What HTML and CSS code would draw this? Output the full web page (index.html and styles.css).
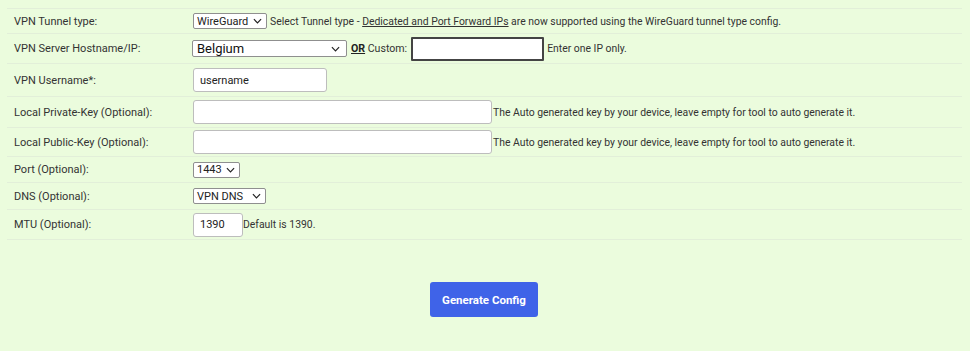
FILE: index.html
```html
<!DOCTYPE html>
<html>
<head>
<meta charset="utf-8">
<link rel="stylesheet" href="styles.css">
</head>
<body>
<form class="form">
  <div class="rows">
    <div class="row r1">
      <div class="label">VPN Tunnel type:</div>
      <div class="field">
        <span class="select sel-tunnel">WireGuard<svg class="chev" viewBox="0 0 10 6"><path d="M1 1l4 4 4-4" fill="none" stroke="#222" stroke-width="1.3"/></svg></span>
        <span class="note">Select Tunnel type - <u class="link">Dedicated and Port Forward IPs</u> are now supported using the WireGuard tunnel type config.</span>
      </div>
    </div>
    <div class="row r2">
      <div class="label">VPN Server Hostname/IP:</div>
      <div class="field">
        <span class="select sel-server">Belgium<svg class="chev" viewBox="0 0 10 6"><path d="M1 1l4 4 4-4" fill="none" stroke="#222" stroke-width="1.3"/></svg></span>
        <span class="note or"><b><u>OR</u></b> Custom:</span>
        <span class="input custom"></span>
        <span class="note">Enter one IP only.</span>
      </div>
    </div>
    <div class="row r3">
      <div class="label">VPN Username*:</div>
      <div class="field">
        <span class="input user">username</span>
      </div>
    </div>
    <div class="row r4">
      <div class="label">Local Private-Key (Optional):</div>
      <div class="field">
        <span class="input key"></span>
        <span class="note">The Auto generated key by your device, leave empty for tool to auto generate it.</span>
      </div>
    </div>
    <div class="row r5">
      <div class="label">Local Public-Key (Optional):</div>
      <div class="field">
        <span class="input key"></span>
        <span class="note">The Auto generated key by your device, leave empty for tool to auto generate it.</span>
      </div>
    </div>
    <div class="row r6">
      <div class="label">Port (Optional):</div>
      <div class="field">
        <span class="select sel-port">1443<svg class="chev" viewBox="0 0 10 6"><path d="M1 1l4 4 4-4" fill="none" stroke="#222" stroke-width="1.3"/></svg></span>
      </div>
    </div>
    <div class="row r7">
      <div class="label">DNS (Optional):</div>
      <div class="field">
        <span class="select sel-dns">VPN DNS<svg class="chev" viewBox="0 0 10 6"><path d="M1 1l4 4 4-4" fill="none" stroke="#222" stroke-width="1.3"/></svg></span>
      </div>
    </div>
    <div class="row r8">
      <div class="label">MTU (Optional):</div>
      <div class="field">
        <span class="input mtu">1390</span>
        <span class="note">Default is 1390.</span>
      </div>
    </div>
  </div>
  <div class="actions">
    <span class="btn">Generate Config</span>
  </div>
</form>
</body>
</html>
```

FILE: styles.css
```css
html, body {
  margin: 0;
  padding: 0;
  background: #ebfcdd;
}
body {
  font-family: Roboto, "Liberation Sans", sans-serif;
  color: #333;
  font-size: 11px;
}
.form {
  padding: 8px 8px 0 7px;
}
.rows {
  border-top: 1px solid #e2efd9;
  width: 955px;
}
.row {
  display: grid;
  grid-template-columns: 186px 1fr;
  align-items: center;
  border-bottom: 1px solid #e2efd9;
  box-sizing: border-box;
}
.r1 { height: 25px; }
.r2 { height: 30px; }
.r3 { height: 33px; }
.r4 { height: 31px; }
.r5 { height: 29px; }
.r6 { height: 26px; }
.r7 { height: 27px; }
.r8 { height: 30px; }
.label {
  padding-left: 7px;
  font-size: 11px;
  color: #333;
}
.field {
  display: flex;
  align-items: center;
  white-space: nowrap;
}
.note {
  font-size: 10.4px;
  color: #333;
}
.link { color: #333; }
.select {
  display: inline-flex;
  align-items: center;
  justify-content: space-between;
  box-sizing: border-box;
  background: #fff;
  border: 1px solid #8f8f8f;
  border-radius: 2px;
  height: 16px;
  padding: 0 4px 0 3px;
  font-size: 11px;
  color: #222;
  margin-right: 3px;
}
.chev { width: 9px; height: 6px; margin-left: 4px; }
.sel-tunnel { width: 74px; margin-left: 0; }
.sel-server {
  width: 155px;
  height: 17px;
  font-size: 13px;
  color: #111;
  margin-left: -1px;
  padding-left: 4px;
  padding-right: 6px;
}
.sel-port { width: 47px; }
.sel-dns { width: 73px; }
.or { margin-right: 4px; margin-left: 1px; font-size: 10.6px; }
.or b { color: #222; }
.input {
  display: inline-flex;
  align-items: center;
  box-sizing: border-box;
  background: #fff;
  border: 1px solid #bdbdbd;
  border-radius: 3px;
  height: 24px;
  padding: 0 6px;
  font-size: 11px;
  color: #222;
}
.custom {
  width: 133px;
  border: 2px solid #444;
  border-radius: 1px;
  margin-right: 3px;
}
.user { width: 134px; }
.key { width: 299px; margin-right: 1px; }
.mtu { width: 50px; }
.actions {
  display: flex;
  padding-top: 42px;
  padding-left: 423px;
}
.btn {
  display: inline-flex;
  align-items: center;
  justify-content: center;
  width: 108px;
  height: 35px;
  background: #3f63e8;
  color: #fff;
  font-weight: 700;
  font-size: 11.5px;
  border-radius: 3px;
}
```
